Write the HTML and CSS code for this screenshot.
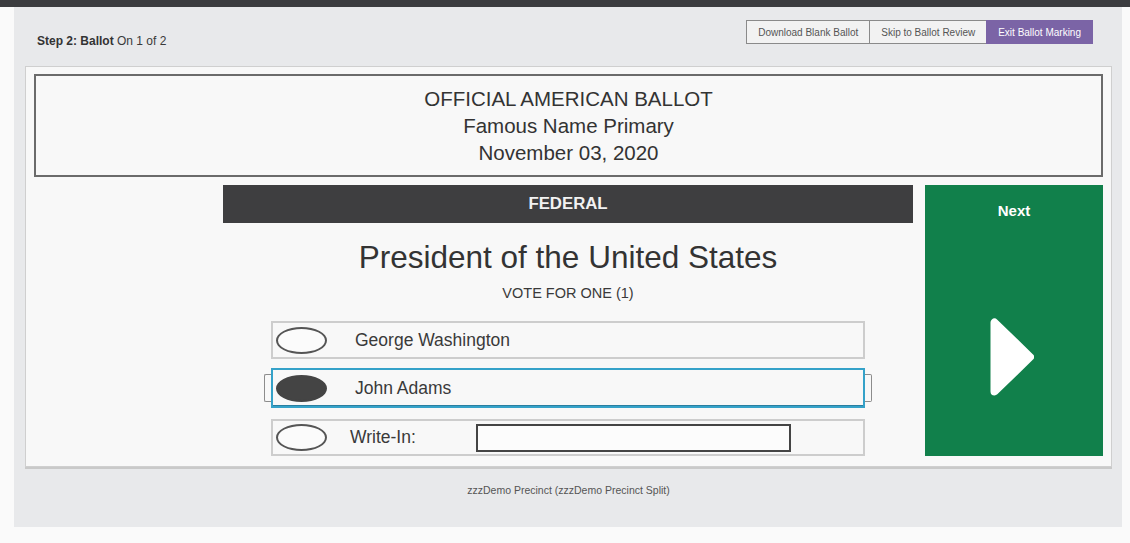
FILE: index.html
```html
<!DOCTYPE html>
<html>
<head>
<meta charset="utf-8">
<link rel="stylesheet" href="styles.css">
</head>
<body>
<div class="topbar"></div>
<div class="panel">
  <div class="header">
    <div class="step"><b>Step 2: Ballot</b> On 1 of 2</div>
    <div class="btn-group">
      <button class="btn">Download Blank Ballot</button>
      <button class="btn">Skip to Ballot Review</button>
      <button class="btn btn-exit">Exit Ballot Marking</button>
    </div>
  </div>
  <div class="card">
    <div class="ballot-head">
      <div>OFFICIAL AMERICAN BALLOT</div>
      <div>Famous Name Primary</div>
      <div>November 03, 2020</div>
    </div>
    <div class="ballot-row">
      <div class="spacer"></div>
      <div class="contest">
        <div class="section-bar">FEDERAL</div>
        <h1 class="contest-title">President of the United States</h1>
        <div class="vote-for">VOTE FOR ONE (1)</div>
        <div class="options">
          <div class="option"><span class="oval"></span><span class="name">George Washington</span></div>
          <div class="option selected"><span class="oval filled"></span><span class="name">John Adams</span></div>
          <div class="option last"><span class="oval"></span><span class="name writein-label">Write-In:</span><span class="writein-box"></span></div>
        </div>
      </div>
      <div class="next">
        <div class="next-label">Next</div>
        <svg class="next-arrow" width="44" height="78" viewBox="0 0 44 78"><path d="M4.5 4.5 L4.5 73.5 L40 39 Z" fill="#fff" stroke="#fff" stroke-width="8" stroke-linejoin="round"/></svg>
      </div>
    </div>
  </div>
  <div class="footer">zzzDemo Precinct (zzzDemo Precinct Split)</div>
</div>
</body>
</html>
```

FILE: styles.css
```css
html, body {
  margin: 0;
  padding: 0;
  background: #fafafa;
  font-family: "Liberation Sans", Arial, sans-serif;
  color: #333;
}
.topbar {
  height: 7px;
  background: #3b3c3f;
}
.panel {
  margin: 0 8px 0 14px;
  background: #e8e9eb;
  padding: 0 10px 0 11px;
  height: 520px;
  box-sizing: border-box;
}
.header {
  height: 59px;
  box-sizing: border-box;
  padding: 13px 19px 0 12px;
  display: flex;
  justify-content: space-between;
  align-items: flex-start;
}
.step {
  margin-top: 14px;
  font-size: 12px;
  color: #3a3a3a;
}
.step b { color: #333; }
.btn-group {
  display: flex;
}
.btn {
  font-family: "Liberation Sans", Arial, sans-serif;
  font-size: 10px;
  height: 24px;
  padding: 0 11px;
  border: 1px solid #8a8a8a;
  background: #f2f2f2;
  color: #555;
  margin: 0;
  margin-left: -1px;
}
.btn-exit {
  background: #7b64a6;
  border-color: #7b64a6;
  color: #fff;
}
.card {
  background: #f8f8f8;
  border: 1px solid #cfcfcf;
  box-shadow: 0 2px 0 #c9c9c9;
  height: 401px;
  box-sizing: border-box;
  padding: 7px 8px 0 8px;
}
.ballot-head {
  border: 2px solid #6b6b6b;
  height: 103px;
  box-sizing: border-box;
  text-align: center;
  font-size: 20.5px;
  line-height: 27px;
  padding-top: 9px;
  color: #333;
}
.ballot-row {
  display: grid;
  grid-template-columns: 177px 690px 178px;
  column-gap: 12px;
  margin-top: 8px;
}
.contest {
  display: flex;
  flex-direction: column;
  align-items: center;
}
.contest > * {
  flex: none;
}
.section-bar {
  align-self: stretch;
  height: 38px;
  background: #3e3e40;
  color: #f2f2f2;
  font-weight: bold;
  font-size: 16.8px;
  display: flex;
  align-items: center;
  justify-content: center;
}
.contest-title {
  margin: 14px 0 0 0;
  font-weight: normal;
  font-size: 31.5px;
  line-height: 40px;
  color: #333;
}
.vote-for {
  font-size: 14.5px;
  margin-top: 8px;
  line-height: 16px;
  color: #3a3a3a;
}
.options {
  margin-top: 20px;
  width: 594px;
  display: flex;
  flex-direction: column;
  gap: 10px;
}
.option {
  position: relative;
  flex: none;
  height: 38px;
  box-sizing: border-box;
  border: 2px solid #cdcdcd;
  display: flex;
  align-items: center;
  padding-left: 3px;
  font-size: 17.5px;
  color: #3a3a3a;
}
.option.last {
  height: 37px;
}
.option.selected {
  height: 40px;
  margin: -1px 0 1px 0;
  border-color: #35a2c9;
  box-shadow: inset 0 -1px 0 #2a7fa0;
}
.option.selected::before,
.option.selected::after {
  content: "";
  position: absolute;
  top: 4px;
  bottom: 4px;
  width: 6px;
  border: 1px solid #8c8c8c;
}
.option.selected::before {
  left: -9px;
  border-right: none;
  border-radius: 2px 0 0 2px;
}
.option.selected::after {
  right: -9px;
  border-left: none;
  border-radius: 0 2px 2px 0;
}
.oval {
  width: 51px;
  height: 27px;
  box-sizing: border-box;
  border: 2px solid #555;
  border-radius: 50%;
  background: #fbfbfb;
  flex: none;
}
.oval.filled {
  background: #444;
  border-color: #444;
}
.name {
  margin-left: 28px;
}
.writein-label {
  margin-left: 23px;
}
.writein-box {
  margin-left: 60px;
  width: 315px;
  height: 28px;
  box-sizing: border-box;
  border: 2px solid #444;
  background: #fcfcfc;
}
.next {
  background: #11804b;
  height: 271px;
  display: flex;
  flex-direction: column;
  align-items: center;
}
.next-label {
  color: #fff;
  font-weight: bold;
  font-size: 15px;
  line-height: 18px;
  margin-top: 17px;
}
.next-arrow {
  margin-top: 98px;
  margin-left: -4px;
}
.footer {
  text-align: center;
  font-size: 10.5px;
  color: #555;
  margin-top: 17px;
}
```
